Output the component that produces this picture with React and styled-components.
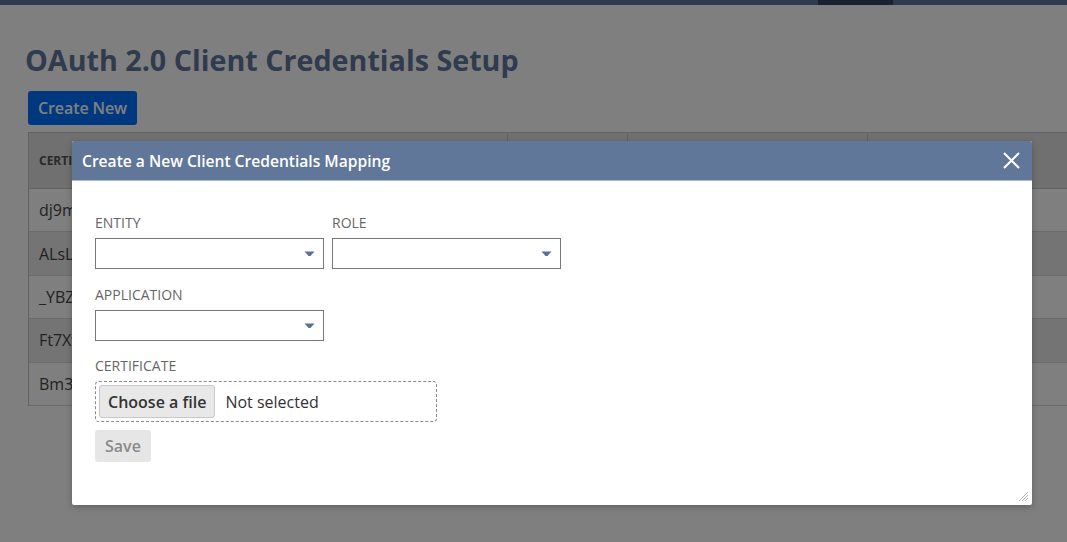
import styled, { createGlobalStyle } from "styled-components";

const GlobalStyle = createGlobalStyle`
  html, body {
    margin: 0;
    padding: 0;
    background: #ffffff;
    font-family: "Open Sans", "Liberation Sans", sans-serif;
  }
`;

const Page = styled.div`
  width: 1067px;
  height: 542px;
  overflow: hidden;
  position: relative;
`;

const TopBar = styled.div`
  height: 5px;
  background: #5c749c;
  display: flex;
  padding-left: 818px;
`;

const TopBarTab = styled.div`
  width: 75px;
  background: #364260;
`;

const Content = styled.div`
  padding: 0 0 0 28px;
`;

const Title = styled.h1`
  margin: 35px 0 0 -3px;
  font-size: 28.7px;
  line-height: 40px;
  font-weight: 700;
  color: #60779c;
`;

const CreateButton = styled.button`
  margin-top: 11px;
  height: 34px;
  padding: 0 10px;
  border: none;
  border-radius: 3px;
  background: #0070ff;
  color: #fff;
  font-family: inherit;
  font-size: 16px;
  font-weight: 600;
  letter-spacing: -0.1px;
`;

const Table = styled.div`
  margin-top: 7px;
  width: 1060px;
  border-top: 1px solid #c4c4c4;
  border-left: 1px solid #c4c4c4;
`;

const HeaderRow = styled.div`
  display: grid;
  grid-template-columns: 479px 120px 240px 1fr;
  height: 55px;
  background: #e0e0e0;
  border-bottom: 1px solid #c4c4c4;
`;

const HeaderCell = styled.div`
  display: flex;
  align-items: center;
  padding-left: 10px;
  font-size: 12px;
  font-weight: 700;
  color: #555;
  border-right: 1px solid #c4c4c4;
`;

const Row = styled.div`
  height: 42.4px;
  display: flex;
  align-items: center;
  padding-left: 10px;
  font-size: 16px;
  color: #444;
  background: ${(p) => (p.$alt ? "#e8e8e8" : "#ffffff")};
  border-bottom: 1px solid #d6d6d6;
`;

const Overlay = styled.div`
  position: absolute;
  inset: 0;
  background: rgba(0, 0, 0, 0.5);
`;

const Modal = styled.div`
  position: absolute;
  left: 72px;
  top: 141px;
  width: 960px;
  height: 364px;
  background: #fff;
  border-radius: 2px;
  box-shadow: 0 2px 6px rgba(0, 0, 0, 0.25);
  display: flex;
  flex-direction: column;
  overflow: hidden;
`;

const ModalHeader = styled.div`
  height: 39px;
  background: #607799;
  border-bottom: 1px solid #a9bad2;
  display: flex;
  align-items: center;
  justify-content: space-between;
  padding: 0 12px 0 10px;
`;

const ModalTitle = styled.div`
  color: #fff;
  font-size: 15.6px;
  font-weight: 600;
`;

const CloseButton = styled.button`
  border: none;
  background: none;
  padding: 0;
  width: 18px;
  height: 18px;
  display: flex;
  align-items: center;
  justify-content: center;
`;

const ModalBody = styled.div`
  flex: 1;
  padding: 32px 23px 0;
  display: flex;
  flex-direction: column;
  position: relative;
`;

const FieldRow = styled.div`
  display: flex;
  gap: 8px;
  margin-bottom: ${(p) => p.$space || 16}px;
`;

const Field = styled.div`
  display: flex;
  flex-direction: column;
  gap: 6px;
`;

const Label = styled.label`
  font-size: 14px;
  line-height: 19px;
  color: #666;
  text-transform: uppercase;
`;

const SelectBox = styled.div`
  width: 227px;
  height: 29px;
  border: 1px solid #777;
  position: relative;
  box-sizing: content-box;
`;

const Caret = styled.svg`
  position: absolute;
  right: 8px;
  top: 12px;
`;

const FileBox = styled.div`
  width: 334px;
  height: 33px;
  padding: 3px;
  border: 1px dashed #8a8a8a;
  border-radius: 4px;
  display: flex;
  align-items: center;
  gap: 10px;
  margin-bottom: 8px;
  box-sizing: content-box;
`;

const FileButton = styled.button`
  height: 33px;
  padding: 0 8px;
  border: 1px solid #c8c8c8;
  border-radius: 3px;
  background: #e8e8e8;
  color: #333;
  font-family: inherit;
  font-size: 16px;
  font-weight: 600;
`;

const FileName = styled.span`
  font-size: 16px;
  color: #333;
`;

const SaveButton = styled.button`
  align-self: flex-start;
  height: 32px;
  padding: 0 10px;
  border: none;
  border-radius: 3px;
  background: #e6e6e6;
  color: #8a8a8a;
  font-family: inherit;
  font-size: 16px;
  font-weight: 600;
`;

const Grip = styled.svg`
  position: absolute;
  right: 3px;
  bottom: 3px;
`;

const rows = ["dj9mQx2", "ALsLp0v", "_YBZk3r", "Ft7Xw1a", "Bm3Tq8c"];

const Select = () => (
  <SelectBox>
    <Caret width="11" height="6" viewBox="0 0 11 6">
      <path d="M0.5 0.5 H10.5 L6.5 5 H4.5 Z" fill="#5b7092" />
    </Caret>
  </SelectBox>
);

export default function App() {
  return (
    <Page>
      <GlobalStyle />
      <TopBar>
        <TopBarTab />
      </TopBar>
      <Content>
        <Title>OAuth 2.0 Client Credentials Setup</Title>
        <CreateButton>Create New</CreateButton>
        <Table>
          <HeaderRow>
            <HeaderCell>CERTIFICATE ID</HeaderCell>
            <HeaderCell>ENTITY</HeaderCell>
            <HeaderCell>ROLE</HeaderCell>
            <HeaderCell>APPLICATION</HeaderCell>
          </HeaderRow>
          {rows.map((r, i) => (
            <Row key={r} $alt={i % 2 === 1}>
              {r}
            </Row>
          ))}
        </Table>
      </Content>
      <Overlay />
      <Modal>
        <ModalHeader>
          <ModalTitle>Create a New Client Credentials Mapping</ModalTitle>
          <CloseButton>
            <svg width="17" height="17" viewBox="0 0 17 17">
              <path d="M1 1 L16 16 M16 1 L1 16" stroke="#fff" strokeWidth="2" />
            </svg>
          </CloseButton>
        </ModalHeader>
        <ModalBody>
          <FieldRow>
            <Field>
              <Label>Entity</Label>
              <Select />
            </Field>
            <Field>
              <Label>Role</Label>
              <Select />
            </Field>
          </FieldRow>
          <FieldRow $space={15}>
            <Field>
              <Label>Application</Label>
              <Select />
            </Field>
          </FieldRow>
          <Field>
            <Label>Certificate</Label>
            <FileBox>
              <FileButton>Choose a file</FileButton>
              <FileName>Not selected</FileName>
            </FileBox>
          </Field>
          <SaveButton>Save</SaveButton>
          <Grip width="10" height="10" viewBox="0 0 10 10">
            <path d="M9 3 L3 9 M9 6 L6 9 M9 0 L0 9" stroke="#b5b5b5" strokeWidth="1" />
          </Grip>
        </ModalBody>
      </Modal>
    </Page>
  );
}
